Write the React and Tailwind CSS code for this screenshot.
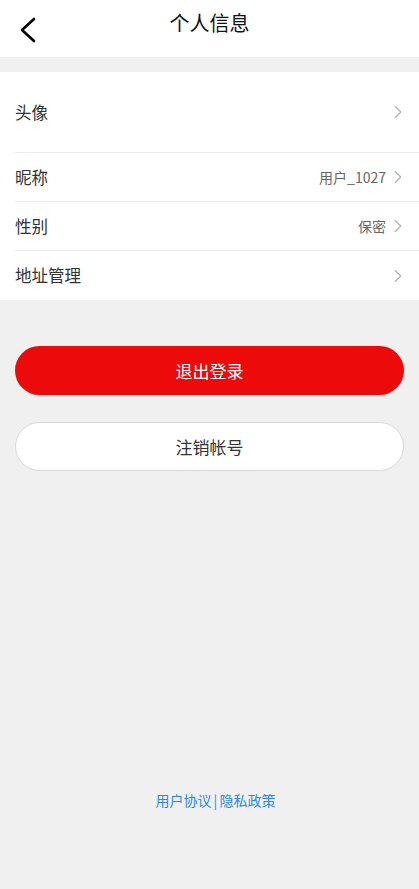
import { ChevronRight } from "lucide-react";

const rows = [
  { label: "头像", value: "", tall: true },
  { label: "昵称", value: "用户_1027" },
  { label: "性别", value: "保密" },
  { label: "地址管理", value: "" },
];

export default function App() {
  return (
    <div
      className="min-h-[889px] w-full bg-[#f0f0f0] flex flex-col"
      style={{ fontFamily: '"Noto Sans CJK SC", "Noto Sans", sans-serif' }}
    >
      {/* Header */}
      <div className="relative h-[57px] bg-white flex items-start justify-center">
        <button className="absolute left-[18px] top-[16px]">
          <svg width="20" height="28" viewBox="0 0 20 28" fill="none">
            <polyline
              points="16,3 4,14 16,25"
              stroke="#000"
              strokeWidth="2.6"
              strokeLinecap="round"
              strokeLinejoin="round"
            />
          </svg>
        </button>
        <h1 className="mt-[8px] text-[20px] leading-[30px] text-[#111]">个人信息</h1>
      </div>

      {/* List */}
      <div className="mt-[15px] bg-white">
        {rows.map((r, i) => (
          <div
            key={r.label}
            className={`ml-[15px] pr-[15px] flex items-center justify-between ${
              i < rows.length - 1 ? "border-b border-[#eeeeee]" : ""
            } ${r.tall ? "h-[81px]" : "h-[49px]"}`}
          >
            <span className="text-[16.5px] text-[#333]">{r.label}</span>
            <div className="flex items-center gap-[1px]">
              {r.value && <span className="text-[14px] text-[#666]">{r.value}</span>}
              <ChevronRight size={22} strokeWidth={1.2} className="text-[#b0b0b0] -mr-[5px]" />
            </div>
          </div>
        ))}
      </div>

      {/* Buttons */}
      <div className="px-[15px] mt-[46px] flex flex-col gap-[27px]">
        <button className="h-[49px] w-full rounded-full bg-[#ec0a0a] text-white text-[17px]">
          退出登录
        </button>
        <button className="h-[49px] w-full rounded-full bg-white border border-[#d8d8d8] text-[#333] text-[17px]">
          注销帐号
        </button>
      </div>

      {/* Footer */}
      <div className="mt-[319px] ml-[12px] flex justify-center text-[14px] text-[#2b88e8]">
        <span>用户协议</span>
        <span className="mx-[2px]">|</span>
        <span>隐私政策</span>
      </div>
    </div>
  );
}
